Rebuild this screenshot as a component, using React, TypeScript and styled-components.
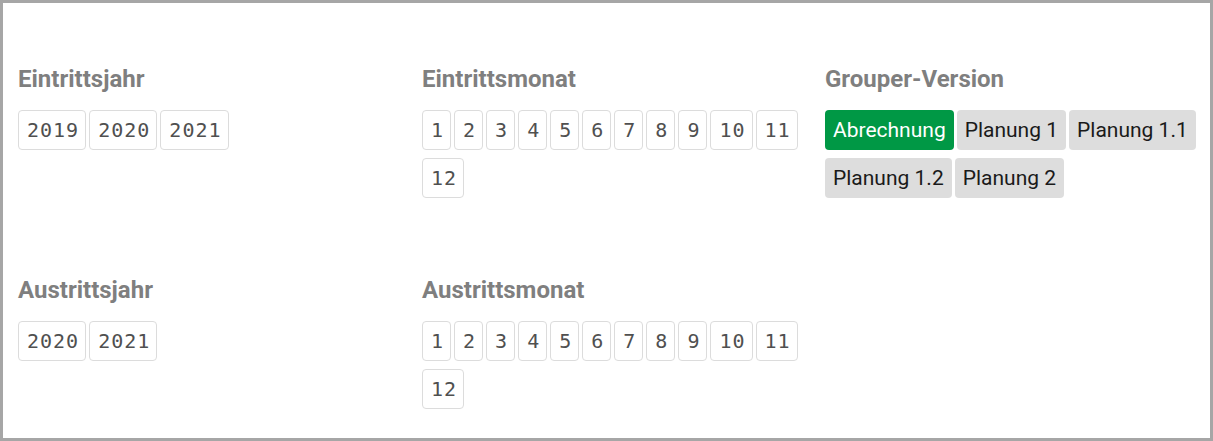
import React from 'react';
import styled, { createGlobalStyle } from 'styled-components';

const GlobalStyle = createGlobalStyle`
    html, body {
        margin: 0;
        padding: 0;
        background: #ffffff;
    }
`;

interface IFilterProps {
    title: string;
    values: string[];
    selected?: string;
    variant: 'mono' | 'pill';
};

const Filter = ({ title, values, selected, variant }: IFilterProps) => (
    <FilterCell>
        <FilterTitle>{title}</FilterTitle>
        <ButtonRow>
            {values.map((value) =>
                variant === 'mono'
                    ? <ValueButton key={value}>{value}</ValueButton>
                    : <VersionButton key={value} active={value === selected}>{value}</VersionButton>
            )}
        </ButtonRow>
    </FilterCell>
);

const months = ['1', '2', '3', '4', '5', '6', '7', '8', '9', '10', '11', '12'];

export default function App() {
    return (
        <>
            <GlobalStyle />
            <Frame>
                <FilterGrid>
                    <Filter title={'Eintrittsjahr'} values={['2019', '2020', '2021']} variant={'mono'} />
                    <Filter title={'Eintrittsmonat'} values={months} variant={'mono'} />
                    <Filter
                        title={'Grouper-Version'}
                        values={['Abrechnung', 'Planung 1', 'Planung 1.1', 'Planung 1.2', 'Planung 2']}
                        selected={'Abrechnung'}
                        variant={'pill'}
                    />
                    <Filter title={'Austrittsjahr'} values={['2020', '2021']} variant={'mono'} />
                    <Filter title={'Austrittsmonat'} values={months} variant={'mono'} />
                </FilterGrid>
            </Frame>
        </>
    );
}

const Frame = styled.div`
    box-sizing: border-box;
    width: 1213px;
    height: 441px;
    border: 3px solid #a6a6a6;
    background: #ffffff;
    overflow: hidden;
`;

const FilterGrid = styled.div`
    display: grid;
    grid-template-columns: 404px 403px 1fr;
    grid-template-rows: auto auto;
    row-gap: 78px;
    padding: 62px 3px 0 15px;
`;

const FilterCell = styled.div`
    display: flex;
    flex-direction: column;
    align-items: flex-start;
`;

const FilterTitle = styled.div`
    font-family: Roboto, 'Liberation Sans', sans-serif;
    font-weight: 700;
    font-size: 24px;
    line-height: 28px;
    color: #7f7f7f;
    margin-bottom: 17px;
`;

const ButtonRow = styled.div`
    display: flex;
    flex-wrap: wrap;
    gap: 8px 3px;
`;

const ValueButton = styled.div`
    box-sizing: border-box;
    height: 40px;
    display: inline-flex;
    align-items: center;
    justify-content: center;
    padding: 0 6px 0 8px;
    border: 1px solid #dcdcdc;
    border-radius: 4px;
    background: #ffffff;
    font-family: 'DejaVu Sans Mono', monospace;
    font-size: 20px;
    letter-spacing: 1px;
    color: #505050;
`;

const VersionButton = styled.div<{ active: boolean }>`
    box-sizing: border-box;
    height: 40px;
    display: inline-flex;
    align-items: center;
    padding: 0 8px;
    border-radius: 4px;
    background: ${({ active }) => active ? '#009845' : '#dddddd'};
    color: ${({ active }) => active ? '#ffffff' : '#1a1a1a'};
    font-family: Roboto, 'Liberation Sans', sans-serif;
    font-size: 21px;
`;
